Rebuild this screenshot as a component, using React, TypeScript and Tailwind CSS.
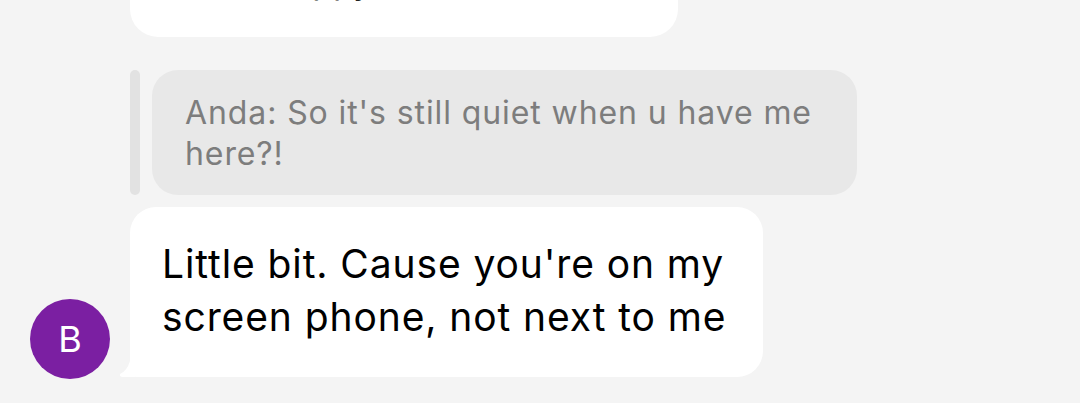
import { ReactNode } from 'react';

const FONT = { fontFamily: 'Inter, "Liberation Sans", sans-serif' };

function Avatar({ letter }: { letter: string }) {
  return (
    <div className="w-[80px] h-[80px] -mb-[2px] rounded-full bg-[#7b1fa2] flex items-center justify-center shrink-0">
      <span className="text-white text-[36px] leading-none">{letter}</span>
    </div>
  );
}

function Bubble({ children }: { children: ReactNode }) {
  return (
    <div className="relative w-[633px] bg-white rounded-[26px] rounded-bl-[6px] pl-[32px] pr-[30px] pt-[30px] pb-[34px]">
      {/* tail */}
      <svg className="absolute left-[-11px] bottom-0" width="16" height="16" viewBox="0 0 16 16">
        <path d="M16 0 L16 16 L4 16 Q0 16 1 13 Q8 10 11 0 Z" fill="#ffffff" />
      </svg>
      {children}
    </div>
  );
}

export default function App() {
  return (
    <div className="w-[1080px] h-[403px] bg-[#f4f4f4] overflow-hidden" style={FONT}>
      {/* previous message, cut off at the top */}
      <div className="ml-[130px] w-[548px] h-[37px] bg-white rounded-b-[28px] overflow-hidden relative">
        <div className="absolute left-[143px] top-[-35px] text-[34px] leading-none text-[#222] whitespace-nowrap">
          happy
        </div>
      </div>

      {/* quoted reply */}
      <div className="mt-[33px] ml-[130px] flex gap-[12px] h-[125px]">
        <div className="w-[10px] rounded-full bg-[#e2e2e2]" />
        <div className="w-[705px] bg-[#e8e8e8] rounded-[26px] pl-[33px] pr-[30px] pt-[22px]">
          <p className="text-[32px] leading-[41px] tracking-[0.9px] text-[#7d7d7d]">
            Anda: So it's still quiet when u have me here?!
          </p>
        </div>
      </div>

      {/* latest message */}
      <div className="mt-[12px] ml-[30px] flex items-end gap-[20px]">
        <Avatar letter="B" />
        <Bubble>
          <p className="text-[39px] leading-[53px] tracking-[0.9px] text-black whitespace-nowrap">
            Little bit. Cause you're on my
            <br />
            screen phone, not next to me
          </p>
        </Bubble>
      </div>
    </div>
  );
}
